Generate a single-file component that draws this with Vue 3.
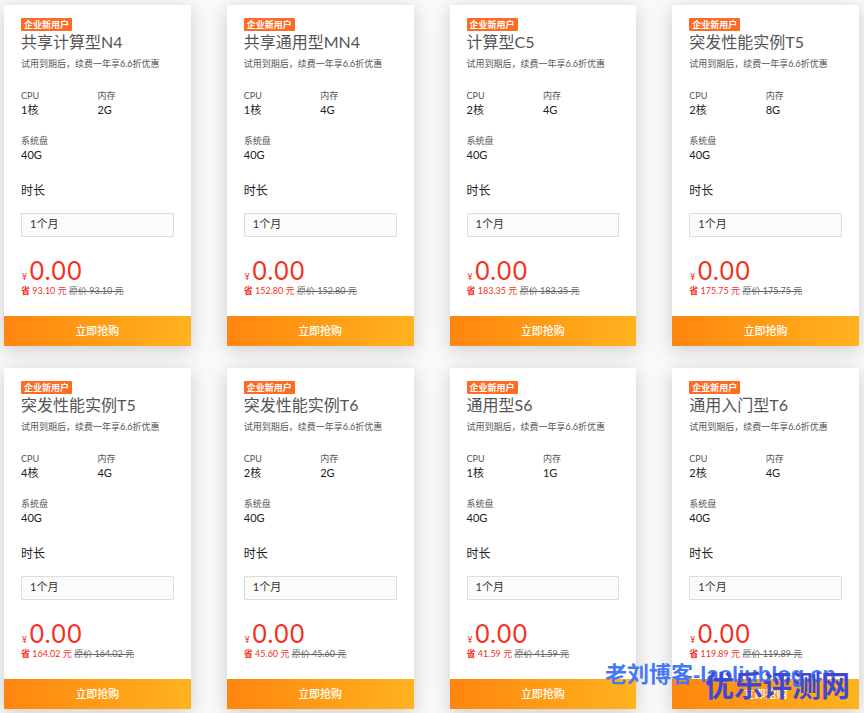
<script setup>
import { ref } from 'vue'

const plans = ref([
  { id: 1, name: '共享计算型N4', cpu: '1核', memory: '2G', disk: '40G', price: '93.10' },
  { id: 2, name: '共享通用型MN4', cpu: '1核', memory: '4G', disk: '40G', price: '152.80' },
  { id: 3, name: '计算型C5', cpu: '2核', memory: '4G', disk: '40G', price: '183.35' },
  { id: 4, name: '突发性能实例T5', cpu: '2核', memory: '8G', disk: '40G', price: '175.75' },
  { id: 5, name: '突发性能实例T5', cpu: '4核', memory: '4G', disk: '40G', price: '164.02' },
  { id: 6, name: '突发性能实例T6', cpu: '2核', memory: '2G', disk: '40G', price: '45.60' },
  { id: 7, name: '通用型S6', cpu: '1核', memory: '1G', disk: '40G', price: '41.59' },
  { id: 8, name: '通用入门型T6', cpu: '2核', memory: '4G', disk: '40G', price: '119.89' }
])
</script>

<template>
  <main class="page">
    <article v-for="plan in plans" :key="plan.id" class="card">
      <div class="card-body">
        <span class="badge">企业新用户</span>
        <h3 class="name">{{ plan.name }}</h3>
        <p class="desc">试用到期后，续费一年享6.6折优惠</p>

        <dl class="specs">
          <div>
            <dt>CPU</dt>
            <dd>{{ plan.cpu }}</dd>
          </div>
          <div>
            <dt>内存</dt>
            <dd>{{ plan.memory }}</dd>
          </div>
          <div>
            <dt>系统盘</dt>
            <dd>{{ plan.disk }}</dd>
          </div>
        </dl>

        <label class="term-label" :for="'term-' + plan.id">时长</label>
        <select :id="'term-' + plan.id" class="term">
          <option>1个月</option>
        </select>

        <div class="price"><span class="yen">¥</span>0.00</div>
        <div class="saving">
          <b>省</b> {{ plan.price }} 元 <del>原价 {{ plan.price }} 元</del>
        </div>
      </div>
      <button class="buy" type="button">立即抢购</button>
    </article>

    <span class="mark mark-blog">老刘博客-laoliublog.cn</span>
    <span class="mark mark-site">优乐评测网</span>
  </main>
</template>

<style>
body {
  background: #f9f9f9;
}
</style>

<style scoped>
.page {
  position: relative;
  display: grid;
  grid-template-columns: repeat(4, 1fr);
  gap: 22px 36px;
  padding: 5px 5px 4px 4px;
  overflow: hidden;
  font-family: Lato, "Noto Sans CJK SC", sans-serif;
  font-weight: 400;
  color: #222;
}

.card {
  background: #fff;
  box-shadow: 0 4px 18px rgba(0, 0, 0, 0.18);
}
.card-body {
  padding: 13px 17px 19px;
}

.badge {
  display: block;
  width: fit-content;
  padding: 0 3px;
  border-radius: 1px;
  background: #ff6a24;
  color: #fff;
  font-size: 9px;
  font-weight: 700;
  line-height: 13px;
}
.name {
  margin: 0;
  font-size: 16px;
  font-weight: 400;
  line-height: 22px;
  color: #555;
  white-space: nowrap;
}
.desc {
  margin: 4px 0 0;
  font-size: 9px;
  line-height: 13px;
  color: #555;
  white-space: nowrap;
}

.specs {
  display: grid;
  grid-template-columns: 1fr 1fr;
  row-gap: 17px;
  margin: 19px 0 0;
}
dt {
  font-size: 9px;
  line-height: 13px;
  color: #555;
}
dd {
  margin: 0;
  font-size: 11px;
  line-height: 15px;
}

.term-label {
  display: block;
  margin-top: 20px;
  font-size: 12px;
  line-height: 18px;
}
.term {
  display: block;
  width: 100%;
  height: 24px;
  margin-top: 13px;
  padding: 0 8px 4px;
  border: 1px solid #ddd;
  border-radius: 1px;
  background: #fbfbfb;
  color: #333;
  font-family: inherit;
  font-size: 11px;
  appearance: none;
}

.price {
  display: flex;
  align-items: baseline;
  height: 28px;
  margin-top: 19px;
  font-family: Inter, "Noto Sans CJK SC", sans-serif;
  font-size: 25px;
  font-weight: 400;
  line-height: 30px;
  color: #f5301f;
}
.yen {
  margin: 0 2px 0 1px;
  font-size: 9px;
  line-height: 13px;
}
.saving {
  font-size: 9px;
  line-height: 13px;
  color: #f5301f;
  white-space: nowrap;
}
del {
  color: #666;
}

.buy {
  display: block;
  width: 100%;
  height: 30px;
  padding: 0 0 3px;
  border: 0;
  background: linear-gradient(90deg, #ff850f, #ffb31e);
  color: #fff;
  font-family: inherit;
  font-size: 11px;
  font-weight: 500;
  cursor: pointer;
}

.mark {
  position: absolute;
  font-family: "Liberation Sans", "Noto Sans CJK SC", sans-serif;
  font-weight: 700;
  white-space: nowrap;
  pointer-events: none;
}
.mark-blog {
  right: 28px;
  bottom: 22px;
  font-size: 22px;
  line-height: 32px;
  color: #4678f5;
}
.mark-site {
  right: 14px;
  bottom: 5px;
  font-size: 29px;
  line-height: 42px;
  color: #3f48d2;
}
</style>
